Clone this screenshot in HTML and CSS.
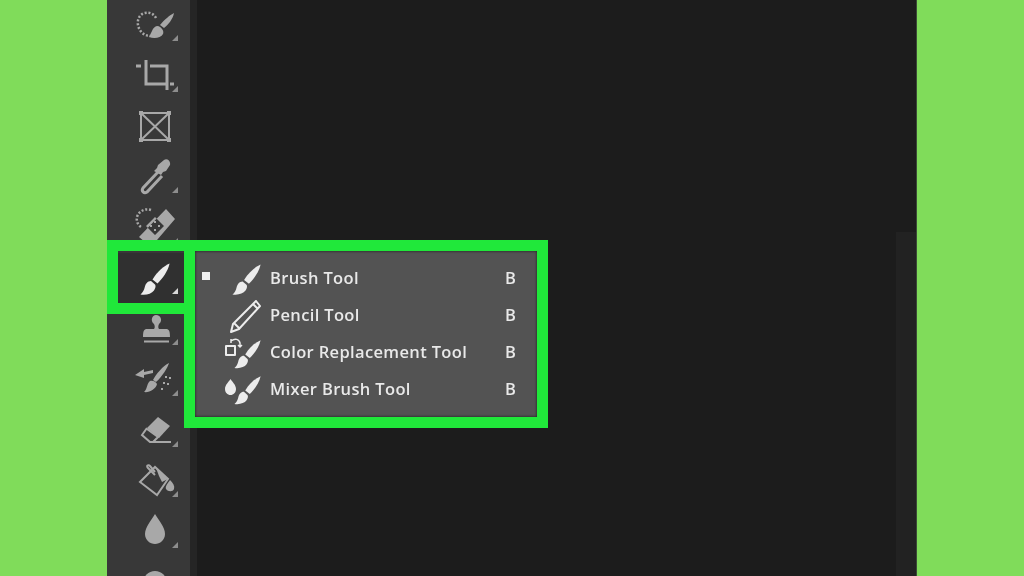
FILE: index.html
```html
<!DOCTYPE html>
<html lang="en">
<head>
  <meta charset="UTF-8">
  <title>Brush Tool flyout</title>
  <link rel="stylesheet" href="styles.css">
</head>
<body>
  <svg class="defs" width="0" height="0">
    <symbol id="brush" viewBox="0 0 30 32">
      <path d="M29.600 .6C24 3 17 9 12.500 16.500l5 4C23 15 28 8 29.600 .6z" fill="currentColor"/>
      <path d="M11 18C7.500 18 5.500 21 4.800 24c-.6 3-2.300 6-4.300 7.500 5.500 .8 11-.5 13.500-4 1.500-2.500 2-4.500 1-6z" fill="currentColor"/>
    </symbol>
  </svg>

  <div class="app">
    <div class="toolbar">
      <!-- lasso brush -->
      <div class="tool corner">
        <svg class="tool-icon" viewBox="0 0 48 48">
          <g transform="translate(0 2)">
            <path d="M25 15c-2-4-6-6-11-5-5 1-8 6-7 12s6 11 12 11" class="dots"/>
            <path d="M43 10c-4 2-10 7-14 12l4 3c4-3 9-9 10-15zM27 23c-3 0-5 2-6 5-1 2-2 4-3 6 5 2 12 1 14-3 1-2 0-6-5-8z" class="fill"/>
          </g>
        </svg>
      </div>
      <!-- crop -->
      <div class="tool corner">
        <svg class="tool-icon" viewBox="0 0 48 48">
          <path d="M5 14h5M15 8v24h21M19 14h17v24M39 32h4" class="line"/>
        </svg>
      </div>
      <!-- frame -->
      <div class="tool">
        <svg class="tool-icon" viewBox="0 0 48 48">
          <path d="M10 10h28v27H10zM10 10l28 27M38 10L10 37" class="line thin"/>
          <path d="M8 8h4v4H8zM36 8h4v4h-4zM8 35h4v4H8zM36 35h4v4h-4z" class="fill"/>
        </svg>
      </div>
      <!-- eyedropper -->
      <div class="tool corner">
        <svg class="tool-icon" viewBox="0 0 48 48">
          <path d="M27 19L12 35c-2 3 1 6 4 4l15-16" class="line"/>
          <path d="M23 18l3-3 1-3 6-5c3-2 7 1 6 5l-4 6-3 1-2 3z" class="fill"/>
        </svg>
      </div>
      <!-- healing brush -->
      <div class="tool corner">
        <svg class="tool-icon" viewBox="0 0 48 48">
          <path d="M20 6c-6-2-12 1-14 7-1 4 1 8 4 10" class="dots"/>
          <path d="M35 5l9 10-24 28-12-10zM24 13l-9 9 9 9 9-9z" class="fill" fill-rule="evenodd"/>
          <path d="M23 17h2v2h-2zM27 21h2v2h-2zM19 21h2v2h-2zM23 25h2v2h-2z" class="fill"/>
        </svg>
      </div>
      <!-- brush, selected -->
      <div class="tool corner active">
        <svg class="tool-icon" viewBox="0 0 48 48"><use href="#brush" x="9" y="8" width="30" height="32"/></svg>
      </div>
      <!-- stamp -->
      <div class="tool corner">
        <svg class="tool-icon" viewBox="0 0 48 48">
          <path d="M25 10c5 0 7 6 3 9-1 2-1 4 0 5h7c3 0 4 2 4 8H12c0-6 1-8 4-8h7c1-1 1-3 0-5-4-3-2-9 2-9z" class="fill"/>
          <path d="M13 36.500h25" class="line thin"/>
        </svg>
      </div>
      <!-- history brush -->
      <div class="tool corner">
        <svg class="tool-icon" viewBox="0 0 48 48">
          <g transform="translate(1 -2)">
            <path d="M3 21l9-6v3l9-2v3l-9 2v3z" class="fill"/>
            <path d="M37 9c-1 4-7 14-13 19l-3-2c3-6 10-14 16-17zM18 27c3-1 6 1 7 3-1 5-8 9-13 8 3-2 3-9 6-11z" class="fill"/>
            <path d="M34 22v2M38 23v2M32 28v2M36 29v2M30 34v2" class="line thin"/>
          </g>
        </svg>
      </div>
      <!-- eraser -->
      <div class="tool corner">
        <svg class="tool-icon" viewBox="0 0 48 48">
          <path d="M27 10l12 9-11 12-12-10z" class="fill"/>
          <path d="M16 21l-5 7 8 7h21M16 22l11 8-5 5" class="line thin"/>
        </svg>
      </div>
      <!-- paint bucket -->
      <div class="tool corner">
        <svg class="tool-icon" viewBox="0 0 48 48">
          <path d="M9 24L24 9l13 12-11 16z" class="line thin"/>
          <path d="M24 14l-5-6c-2-2-4 0-2 2l7 7" class="line thin"/>
          <path d="M25 10l12 11-6 3-3-6z" class="fill"/>
          <path d="M39 22c3 3 5 6 4 9-1 3-6 3-8 0-1-3 2-6 4-9z" class="fill"/>
        </svg>
      </div>
      <!-- blur -->
      <div class="tool corner">
        <svg class="tool-icon" viewBox="0 0 48 48">
          <path d="M24 6c4 7 10 13 10 20 0 6-5 10-10 10s-10-4-10-10c0-7 6-13 10-20z" class="fill"/>
        </svg>
      </div>
      <!-- dodge, cut off by the window -->
      <div class="tool">
        <svg class="tool-icon" viewBox="0 0 48 48"><circle cx="24" cy="24" r="12" class="fill"/></svg>
      </div>
    </div>
    <div class="toolbar-edge"></div>
    <div class="workspace">
      <div class="dock"></div>
    </div>
  </div>

  <div class="tool-highlight"></div>

  <div class="flyout">
    <div class="flyout-row">
      <span class="mark"></span>
      <svg class="row-icon" viewBox="0 0 40 36"><use href="#brush" x="11" y="3" width="29" height="31"/></svg>
      <span class="row-name">Brush Tool</span>
      <span class="row-key">B</span>
    </div>
    <div class="flyout-row">
      <span class="mark off"></span>
      <svg class="row-icon" viewBox="0 0 40 36">
        <path d="M35 3l4 5-21 23-8 3 2-8zM32 6l5 5M13 25l5 5" class="pencil"/>
      </svg>
      <span class="row-name">Pencil Tool</span>
      <span class="row-key">B</span>
    </div>
    <div class="flyout-row">
      <span class="mark off"></span>
      <svg class="row-icon" viewBox="0 0 40 36">
        <path d="M5 11h9v9H5z" class="pencil"/>
        <path d="M10 6c4-3 8-2 9 2v4M17 10l2 2 2-2M10 4v4" class="pencil thin"/>
        <use href="#brush" x="13" y="4" width="27" height="30"/>
      </svg>
      <span class="row-name">Color Replacement Tool</span>
      <span class="row-key">B</span>
    </div>
    <div class="flyout-row">
      <span class="mark off"></span>
      <svg class="row-icon" viewBox="0 0 40 36">
        <path d="M9.500 7c2 3 5.500 6 5.500 10 0 3.500-2.500 6-5.500 6S4 20.500 4 17c0-4 3.500-7 5.500-10z" fill="currentColor"/>
        <use href="#brush" x="13" y="3" width="27" height="30"/>
      </svg>
      <span class="row-name">Mixer Brush Tool</span>
      <span class="row-key">B</span>
    </div>
  </div>
</body>
</html>
```

FILE: styles.css
```css
* { box-sizing: border-box; }
html, body { height: 100%; }
body {
  margin: 0; background: #80dc5a; overflow: hidden;
  font-family: "Open Sans", "Noto Sans", sans-serif;
  display: flex; justify-content: flex-start;
}
.defs { position: absolute; }

.app { display: flex; width: 810px; height: 576px; margin-left: 107px; background: #1c1c1c; overflow: hidden; border-right: 1px solid #3c4a38; }

.toolbar { width: 83px; height: 576px; background: #383838; flex-shrink: 0; overflow: hidden; }
.toolbar-edge { width: 7px; background: #252525; flex-shrink: 0; }
.workspace { flex: 1; display: flex; justify-content: flex-end; }
.dock { width: 20px; margin-top: 232px; background: #222; }

.tool { height: 50.7px; position: relative; padding-left: 24px; display: flex; align-items: center; color: #a8a8a8; }
.tool-icon { width: 48px; height: 48px; flex-shrink: 0; overflow: visible; filter: blur(.35px); }
.tool.corner::after {
  content: ""; position: absolute; left: 65px; top: 35px;
  border-left: 6px solid transparent; border-bottom: 6px solid #8d8d8d;
}
.tool.active { background: #303030; color: #ececec; }
.tool.active::after { border-bottom-color: #d8d8d8; }

.fill { fill: currentColor; stroke: none; }
.line { fill: none; stroke: currentColor; stroke-width: 3; }
.thin { stroke-width: 2; }
.dots { fill: none; stroke: currentColor; stroke-width: 2.500; stroke-dasharray: 2 1.800; }

.tool-highlight { position: absolute; left: 107px; top: 240px; width: 88px; height: 74px; border: 11px solid #20e83a; }

.flyout {
  position: absolute; left: 184px; top: 240px; width: 364px; height: 188px;
  border: 11px solid #20e83a; background: #535353; padding: 9px 0;
  box-shadow: inset 0 0 3px #1c1c1c;
}
.flyout-row { height: 37px; display: flex; align-items: center; color: #e9e9e9; padding-left: 7px; }
.mark { width: 8px; height: 8px; background: #f0f0f0; margin-bottom: 6px; flex-shrink: 0; }
.mark.off { background: none; }
.row-icon { width: 40px; height: 36px; margin-left: 11px; flex-shrink: 0; color: #ececec; overflow: visible; filter: blur(.3px); }
.pencil { fill: none; stroke: currentColor; stroke-width: 2; stroke-linejoin: round; }
.pencil.thin { stroke-width: 1.500; }
.row-name { font-size: 16.500px; font-weight: 600; margin-left: 9px; margin-bottom: 2px; letter-spacing: .35px; white-space: nowrap; flex: 1; filter: blur(.3px); }
.row-key { font-size: 16.500px; font-weight: 600; width: 32px; margin-bottom: 2px; filter: blur(.3px); }
```
